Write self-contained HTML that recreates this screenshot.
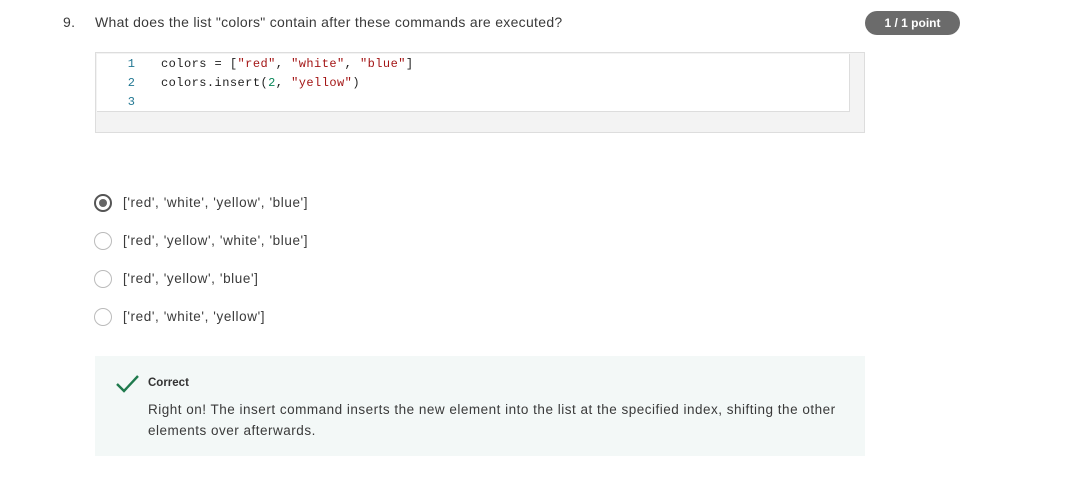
<!DOCTYPE html>
<html><head><style>
body{margin:0;width:1071px;height:501px;background:#fff;font-family:"Liberation Sans",sans-serif;color:#333;position:relative;overflow:hidden}
.a{position:absolute}
.q{font-size:14px;letter-spacing:0.3px;color:#3a3a3a}
.code{left:95px;top:52px;width:768px;height:79px;border:1px solid #ddd;background:#f3f3f3}
.inner{position:absolute;left:1px;top:1px;width:752px;height:57px;background:#fff;border-right:1px solid #ddd;border-bottom:1px solid #ddd}
.ln{position:absolute;left:28px;width:10px;text-align:right;font:12px "Liberation Mono",monospace;color:#237893}
.cl{position:absolute;left:64px;font:12px "Liberation Mono",monospace;letter-spacing:0.45px;color:#222;white-space:pre}
.s{color:#a31515}.n{color:#098658}
.badge{left:865px;top:11px;width:95px;height:24px;border-radius:12px;background:#6b6b6b;color:#fff;font-size:12px;font-weight:bold;text-align:center;line-height:24px}
.r{left:95px;width:16px;height:16px;border:1.5px solid #bbb;border-radius:50%;box-sizing:border-box}
.o{left:123px;font-size:13.5px;letter-spacing:0.6px;color:#3a3a3a}
.fb{left:95px;top:356px;width:770px;height:100px;background:#f3f8f7}
</style></head><body>
<div class="a q" style="left:63px;top:14px">9.</div>
<div class="a q" style="left:95px;top:14px">What does the list "colors" contain after these commands are executed?</div>
<div class="a badge">1 / 1 point</div>
<div class="a code"><div class="inner">
<div class="ln" style="top:3px">1</div><div class="ln" style="top:22px">2</div><div class="ln" style="top:41px">3</div>
<div class="cl" style="top:3px">colors = [<span class="s">"red"</span>, <span class="s">"white"</span>, <span class="s">"blue"</span>]</div>
<div class="cl" style="top:22px">colors.insert(<span class="n">2</span>, <span class="s">"yellow"</span>)</div>
</div></div>
<div class="a r" style="top:194px;border:2px solid #555;width:18px;height:18px;left:94px"><div style="position:absolute;left:3px;top:3px;width:8px;height:8px;border-radius:50%;background:#666"></div></div>
<div class="a o" style="top:195px">['red', 'white', 'yellow', 'blue']</div>
<div class="a r" style="top:232px;width:18px;height:18px;left:94px"></div>
<div class="a o" style="top:233px">['red', 'yellow', 'white', 'blue']</div>
<div class="a r" style="top:270px;width:18px;height:18px;left:94px"></div>
<div class="a o" style="top:271px">['red', 'yellow', 'blue']</div>
<div class="a r" style="top:308px;width:18px;height:18px;left:94px"></div>
<div class="a o" style="top:309px">['red', 'white', 'yellow']</div>
<div class="a fb"></div>
<svg class="a" style="left:115px;top:373px" width="26" height="22" viewBox="0 0 26 22"><path d="M2 11 L9 18 L23 3" fill="none" stroke="#1f7a4d" stroke-width="2.4"/></svg>
<div class="a" style="left:148px;top:377px;font-size:11.5px;font-weight:bold;color:#333">Correct</div>
<div class="a" style="left:148px;top:399px;font-size:13.5px;letter-spacing:0.5px;line-height:21px;color:#3a3a3a;width:705px">Right on! The insert command inserts the new element into the list at the specified index, shifting the other elements over afterwards.</div>
</body></html>
